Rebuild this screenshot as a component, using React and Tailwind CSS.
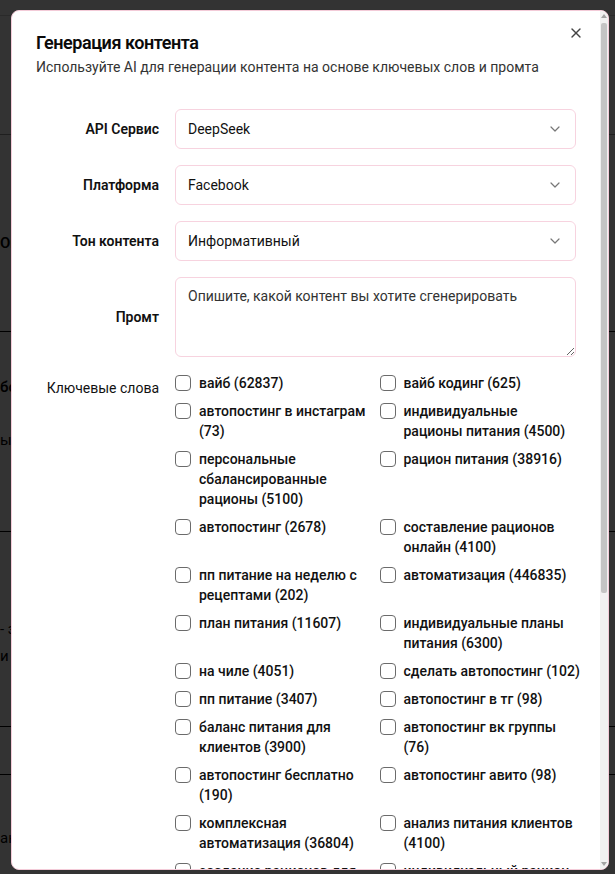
import { ChevronDown, X } from "lucide-react";

const keywords = [
  ["вайб (62837)"],
  ["вайб кодинг (625)"],
  ["автопостинг в инстаграм", "(73)"],
  ["индивидуальные", "рационы питания (4500)"],
  ["персональные", "сбалансированные", "рационы (5100)"],
  ["рацион питания (38916)"],
  ["автопостинг (2678)"],
  ["составление рационов", "онлайн (4100)"],
  ["пп питание на неделю с", "рецептами (202)"],
  ["автоматизация (446835)"],
  ["план питания (11607)"],
  ["индивидуальные планы", "питания (6300)"],
  ["на чиле (4051)"],
  ["сделать автопостинг (102)"],
  ["пп питание (3407)"],
  ["автопостинг в тг (98)"],
  ["баланс питания для", "клиентов (3900)"],
  ["автопостинг вк группы", "(76)"],
  ["автопостинг бесплатно", "(190)"],
  ["автопостинг авито (98)"],
  ["комплексная", "автоматизация (36804)"],
  ["анализ питания клиентов", "(4100)"],
  ["создание рационов для", "клиентов (1200)"],
  ["индивидуальный рацион", "питания (2400)"],
  ["рацион питания на", "неделю (5300)"],
  ["автопостинг в вк", "(1450)"],
];

function SelectBox({ value }) {
  return (
    <button
      type="button"
      className="flex h-10 w-full items-center justify-between rounded-md border border-[#f7d3df] bg-white px-3 text-sm text-[#111]"
    >
      <span>{value}</span>
      <ChevronDown className="h-4 w-4 text-[#777]" strokeWidth={1.8} />
    </button>
  );
}

function Row({ label, children }) {
  return (
    <div className="grid grid-cols-4 items-center gap-4">
      <div className="text-right text-sm font-semibold text-[#111]">{label}</div>
      <div className="col-span-3">{children}</div>
    </div>
  );
}

function Keyword({ lines }) {
  return (
    <label className="flex items-start gap-2">
      <span className="mt-[2px] h-4 w-4 shrink-0 rounded-[4px] border border-[#6b6b6b] bg-white" />
      <span className="text-sm font-medium leading-5 text-[#111]">
        {lines.map((l, i) => (
          <span key={i} className="block whitespace-nowrap">
            {l}
          </span>
        ))}
      </span>
    </label>
  );
}

function PageBehind() {
  return (
    <div className="flex h-full w-full flex-col bg-white text-[15px] font-semibold text-black">
      <div className="h-[16px] shrink-0 border-b border-[#cfcfcf]" />
      <div className="h-[119px] shrink-0 border-b border-[#999]" />
      <div className="flex h-[197px] shrink-0 items-center border-b border-black pt-[20px]">
        <span>Описание</span>
      </div>
      <div className="flex h-[200px] shrink-0 flex-col gap-[30px] border-b border-black pt-[44px]">
        <span>бонус</span>
        <span className="font-normal">ы</span>
      </div>
      <div className="flex h-[195px] shrink-0 flex-col gap-[4px] border-b border-black pt-[86px] font-normal">
        <span>- з</span>
        <span>и</span>
      </div>
      <div className="h-[48px] shrink-0 border-b border-black" />
      <div className="flex h-[98px] shrink-0 items-end pb-[24px]">
        <span className="font-normal">анализ</span>
      </div>
    </div>
  );
}

function FakeScrollbar() {
  return (
    <div className="flex w-[8px] shrink-0 flex-col items-center bg-[#f1f1f1] pb-[3px] pt-[3px]">
      <svg width="6" height="4" viewBox="0 0 6 4" className="shrink-0">
        <path d="M3 0 L6 4 L0 4 Z" fill="#a3a3a3" />
      </svg>
      <div className="mt-[5px] h-[570px] w-[6px] shrink-0 rounded-[2px] bg-[#c4c4c4]" />
      <div className="flex-1" />
      <svg width="6" height="4" viewBox="0 0 6 4" className="shrink-0">
        <path d="M0 0 L6 0 L3 4 Z" fill="#a3a3a3" />
      </svg>
    </div>
  );
}

export default function App() {
  return (
    <div
      className="relative h-[874px] w-[615px] overflow-hidden"
      style={{ fontFamily: "Roboto, 'Noto Sans', sans-serif" }}
    >
      <PageBehind />
      <div className="absolute inset-0 bg-black/80" />
      <div className="absolute left-[11px] top-[10px] flex h-[860px] w-[598px] overflow-hidden rounded-lg border border-[#f3cbd8] bg-white">
        <div className="relative grid min-w-0 flex-1 content-start gap-4 px-6 pb-6 pt-[23px]">
          <button
            type="button"
            className="absolute right-4 top-[14px] text-[#444]"
            aria-label="Закрыть"
          >
            <X className="h-4 w-4" strokeWidth={2} />
          </button>
          <div className="flex flex-col gap-[5px]">
            <h2 className="text-lg font-semibold leading-none tracking-tight text-[#0a0a0a]">
              Генерация контента
            </h2>
            <p className="text-sm text-[#333]">
              Используйте AI для генерации контента на основе ключевых слов и промта
            </p>
          </div>

          <div className="grid gap-4 py-4">
            <Row label="API Сервис">
              <SelectBox value="DeepSeek" />
            </Row>
            <Row label="Платформа">
              <SelectBox value="Facebook" />
            </Row>
            <Row label="Тон контента">
              <SelectBox value="Информативный" />
            </Row>
            <Row label="Промт">
              <textarea
                className="block h-20 w-full rounded-md border border-[#f7d3df] px-3 py-2 text-sm text-[#111] outline-none placeholder:text-[#333]"
                placeholder="Опишите, какой контент вы хотите сгенерировать"
              />
            </Row>
            <div className="grid grid-cols-4 items-start gap-4">
              <div className="pt-[5px] text-right text-sm text-[#111]">Ключевые слова</div>
              <div className="col-span-3 grid grid-cols-2 gap-x-2 gap-y-2">
                {keywords.map((k, i) => (
                  <Keyword key={i} lines={k} />
                ))}
              </div>
            </div>
          </div>
        </div>
        <FakeScrollbar />
      </div>
    </div>
  );
}
